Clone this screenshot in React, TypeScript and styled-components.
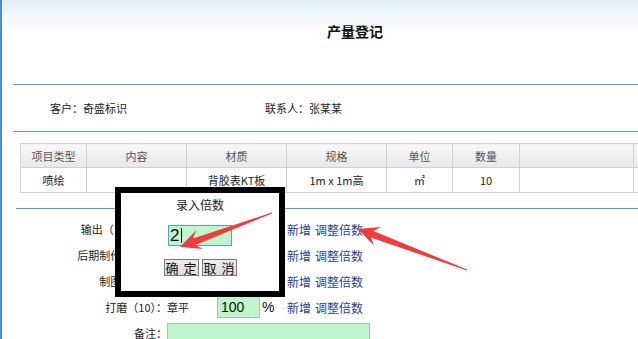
import React from "react";
import styled, { createGlobalStyle } from "styled-components";

const GlobalStyle = createGlobalStyle`
  html, body { margin: 0; padding: 0; background: #fff; }
  body { font-family: "Noto Sans CJK SC", "Liberation Sans", sans-serif; color: #222; }
  * { box-sizing: border-box; }
`;

const Page = styled.div`
  position: relative;
  width: 638px;
  height: 339px;
  overflow: hidden;
  border-left: 2px solid #4a8fd6;
  background: #fff;
`;

const Header = styled.div`
  height: 84px;
  background: linear-gradient(#e2eefa 0px, #f4f9fe 18px, #ffffff 36px);
  padding: 21px 0 0 325px;
`;

const Title = styled.h1`
  margin: 0;
  font-size: 14px;
  line-height: 20px;
  font-weight: bold;
  color: #111;
`;

const Rule = styled.div<{ $indent: number }>`
  height: 1px;
  margin-left: ${(p) => p.$indent}px;
  background: #5b9bd5;
`;

const InfoRow = styled.div`
  height: 46px;
  display: grid;
  grid-template-columns: 215px auto;
  align-items: center;
  padding-left: 48px;
  font-size: 11px;
  color: #222;
`;

const TableArea = styled.div`
  padding: 11px 0 15px 18px;
`;

const Table = styled.table`
  border-collapse: collapse;
  table-layout: fixed;
  width: 693px;
  font-size: 11px;
`;

const HeadCell = styled.th<{ $w: number }>`
  width: ${(p) => p.$w}px;
  height: 24px;
  padding: 0;
  border: 1px solid #d0d0d0;
  background: linear-gradient(#f8f8f8, #e8e8e8);
  color: #555;
  font-weight: normal;
  text-align: center;
`;

const Cell = styled.td`
  height: 25px;
  padding: 0;
  border: 1px solid #d0d0d0;
  text-align: center;
  color: #222;
`;

const Form = styled.div`
  padding-top: 7px;
  display: grid;
  grid-template-columns: 165px 50px 43px 27px auto;
  grid-auto-rows: 26px;
  align-items: center;
  font-size: 11px;
`;

const Label = styled.div`
  text-align: right;
  white-space: nowrap;
  color: #222;
`;

const Name = styled.div`
  color: #222;
`;

const GreenInput = styled.div`
  height: 22px;
  border: 1px solid #b8b8b8;
  background: #bdf6ca;
  font-family: "Liberation Sans", sans-serif;
  font-size: 14px;
  line-height: 20px;
  padding-left: 3px;
  color: #111;
`;

const Percent = styled.div`
  padding-left: 2px;
  font-family: "Liberation Sans", sans-serif;
  font-size: 14px;
  color: #111;
`;

const Links = styled.div`
  display: flex;
  gap: 4px;
  font-size: 12px;
`;

const Link = styled.a`
  color: #1f3f96;
  text-decoration: none;
  cursor: pointer;
`;

const Remark = styled.div`
  grid-column: 2 / span 4;
  align-self: start;
  margin-top: 3px;
  width: 203px;
  height: 40px;
  border: 1px solid #b8b8b8;
  background: #bdf6ca;
`;

const Dialog = styled.div`
  position: absolute;
  left: 113px;
  top: 187px;
  width: 170px;
  height: 110px;
  border: 6px solid #000;
  background: #fff;
  display: flex;
  flex-direction: column;
  align-items: center;
`;

const DialogTitle = styled.div`
  margin-top: 4px;
  font-size: 12px;
  line-height: 16px;
  color: #222;
`;

const DialogInput = styled.div`
  margin-top: 12px;
  width: 64px;
  height: 21px;
  border: 1px solid #5b9bd5;
  background: #bdf6ca;
  display: flex;
  align-items: center;
  padding-left: 1px;
  font-family: "Liberation Sans", sans-serif;
  font-size: 17px;
  color: #111;
`;

const Caret = styled.span`
  display: inline-block;
  width: 1px;
  height: 15px;
  margin-left: 2px;
  background: #000;
`;

const ButtonRow = styled.div`
  margin-top: 13px;
  display: flex;
  gap: 3px;
`;

const Button = styled.button`
  width: 35px;
  height: 17px;
  padding: 0;
  border: 1px solid #7a7a7a;
  background: linear-gradient(#ececec, #dcdcdc);
  font-family: "Noto Sans CJK SC", sans-serif;
  font-size: 13px;
  line-height: 15px;
  color: #111;
  white-space: pre;
  display: flex;
  justify-content: center;
  align-items: center;
  gap: 5px;
`;

const Overlay = styled.svg`
  position: absolute;
  left: -2px;
  top: 0;
  width: 638px;
  height: 339px;
  pointer-events: none;
`;

type P = [number, number];

function arrowPoints(tail: P, tip: P, headLen: number, hw: number, sw: number, tw: number, barb: number): string {
  const dx = tip[0] - tail[0];
  const dy = tip[1] - tail[1];
  const len = Math.hypot(dx, dy);
  const ux = dx / len;
  const uy = dy / len;
  const nx = -uy;
  const ny = ux;
  const bx = tip[0] - ux * headLen;
  const by = tip[1] - uy * headLen;
  const wx = tip[0] - ux * (headLen + barb);
  const wy = tip[1] - uy * (headLen + barb);
  const pts: P[] = [
    [tail[0] + nx * tw, tail[1] + ny * tw],
    [bx + nx * sw, by + ny * sw],
    [wx + nx * hw, wy + ny * hw],
    tip,
    [wx - nx * hw, wy - ny * hw],
    [bx - nx * sw, by - ny * sw],
    [tail[0] - nx * tw, tail[1] - ny * tw],
  ];
  return pts.map((p) => `${p[0].toFixed(1)},${p[1].toFixed(1)}`).join(" ");
}

const rows = [
  { label: "输出（100000）：", name: "章平", value: "100" },
  { label: "后期制作（100）：", name: "章平", value: "100" },
  { label: "制图（100）：", name: "章平", value: "100" },
  { label: "打磨（10）：", name: "章平", value: "100" },
];

const columns: [string, number][] = [
  ["项目类型", 66],
  ["内容", 100],
  ["材质", 100],
  ["规格", 100],
  ["单位", 66],
  ["数量", 67],
  ["", 114],
  ["", 80],
];

export default function App() {
  return (
    <>
      <GlobalStyle />
      <Page>
        <Header>
          <Title>产量登记</Title>
        </Header>
        <Rule $indent={11} />
        <InfoRow>
          <span>客户：奇盛标识</span>
          <span>联系人：张某某</span>
        </InfoRow>
        <Rule $indent={11} />
        <TableArea>
          <Table>
            <thead>
              <tr>
                {columns.map(([t, w], i) => (
                  <HeadCell key={i} $w={w}>{t}</HeadCell>
                ))}
              </tr>
            </thead>
            <tbody>
              <tr>
                <Cell>喷绘</Cell>
                <Cell></Cell>
                <Cell>背胶表KT板</Cell>
                <Cell>1m x 1m高</Cell>
                <Cell>㎡</Cell>
                <Cell>10</Cell>
                <Cell></Cell>
                <Cell></Cell>
              </tr>
            </tbody>
          </Table>
        </TableArea>
        <Rule $indent={14} />
        <Form>
          {rows.map((r, i) => (
            <React.Fragment key={i}>
              <Label>{r.label}</Label>
              <Name>{r.name}</Name>
              <GreenInput>{r.value}</GreenInput>
              <Percent>%</Percent>
              <Links>
                <Link>新增</Link>
                <Link>调整倍数</Link>
              </Links>
            </React.Fragment>
          ))}
          <Label>备注：</Label>
          <Remark />
        </Form>
        <Dialog>
          <DialogTitle>录入倍数</DialogTitle>
          <DialogInput>
            2<Caret />
          </DialogInput>
          <ButtonRow>
            <Button><span>确</span><span>定</span></Button>
            <Button><span>取</span><span>消</span></Button>
          </ButtonRow>
        </Dialog>
        <Overlay viewBox="0 0 638 339">
          <polygon fill="#f23b3b" points={arrowPoints([272, 213], [180, 247], 15, 10, 3.5, 0.4, 6)} />
          <polygon fill="#f23b3b" points={arrowPoints([467, 270], [358, 229], 15, 10, 3.5, 0.4, 6)} />
        </Overlay>
      </Page>
    </>
  );
}
